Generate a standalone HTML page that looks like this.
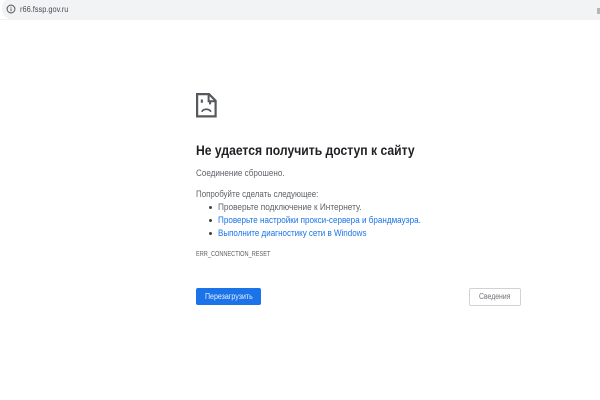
<!DOCTYPE html>
<html lang="ru">
<head>
<meta charset="utf-8">
<title>r66.fssp.gov.ru</title>
<style>
html,body{margin:0;padding:0;width:600px;height:400px;overflow:hidden;background:#fff;font-family:"Liberation Sans","DejaVu Sans",sans-serif}
#wrap{position:absolute;left:0;top:0;width:600px;height:400px;filter:blur(.35px)}
.t{position:absolute;white-space:nowrap;line-height:1;transform-origin:0 50%}
#line{position:absolute;left:0;top:19px;width:600px;height:1px;background:#f1f2f3}
#pill{position:absolute;left:2px;top:-2px;width:598px;height:21px;background:#f1f3f4;border-radius:10px 0 0 10px}
.g{color:#5f6368;font-size:9px}
.b{color:#1a73e8;font-size:9px}
.dot{position:absolute;left:208.5px;width:3px;height:3px;border-radius:50%;background:#444}
.btn{position:absolute;box-sizing:border-box;border-radius:2px}
</style>
</head>
<body>
<div id="wrap">
<div id="line"></div>
<div id="pill"></div>
<svg style="position:absolute;left:6px;top:4px" width="10" height="10" viewBox="0 0 10 10"><circle cx="5" cy="5" r="3.9" fill="none" stroke="#5f6368" stroke-width="1.1"/><path d="M5 4.4V7.2M5 2.7V3.6" stroke="#5f6368" stroke-width="1"/></svg>
<div class="t" style="left:20px;top:5px;font-size:8.5px;color:#4a4d51;transform:scaleX(.87)">r66.fssp.gov.ru</div>
<div style="position:absolute;left:597px;top:8px;width:3px;height:6px;background:#b5b8bb"></div>

<svg style="position:absolute;left:196px;top:93px" width="21" height="25" viewBox="0 0 21 25">
<path d="M1.1 1.1H13L19.6 7.7V23.4H1.1Z" fill="none" stroke="#55585c" stroke-width="2.2"/>
<path d="M12.6 1.1V8.2H19.6" fill="none" stroke="#55585c" stroke-width="2"/>
<path d="M4.8 6.5H6.9V9.8H4.8ZM13 8.8H15.1V11.4H13Z" fill="#55585c"/>
<path d="M5.8 18.8C7.4 15.4 13.2 15.4 14.9 18.8" fill="none" stroke="#55585c" stroke-width="1.7"/>
</svg>

<div class="t" style="left:196px;top:144px;font-size:13.5px;font-weight:bold;color:#202124;transform:scaleX(.9)">Не удается получить доступ к сайту</div>
<div class="t g" style="left:196px;top:169px;transform:scaleX(.9)">Соединение сброшено.</div>
<div class="t g" style="left:196px;top:190px;transform:scaleX(.88)">Попробуйте сделать следующее:</div>
<div class="dot" style="top:206px"></div>
<div class="t g" style="left:218px;top:203px;transform:scaleX(.917)">Проверьте подключение к Интернету.</div>
<div class="dot" style="top:219px"></div>
<div class="t b" style="left:218px;top:216px;transform:scaleX(.9)">Проверьте настройки прокси-сервера и брандмауэра.</div>
<div class="dot" style="top:232px"></div>
<div class="t b" style="left:218px;top:229px;transform:scaleX(.89)">Выполните диагностику сети в Windows</div>
<div class="t" style="left:196px;top:251px;font-size:7px;color:#5f6368;transform:scaleX(.8)">ERR_CONNECTION_RESET</div>

<div class="btn" style="left:196px;top:288px;width:65px;height:17px;background:#1a73e8"></div>
<div class="t" style="left:205px;top:293px;font-size:8px;color:#e8f0fe;transform:scaleX(.88)">Перезагрузить</div>
<div class="btn" style="left:469px;top:288px;width:52px;height:18px;background:#fff;border:1px solid #d0d2d4"></div>
<div class="t" style="left:479px;top:293px;font-size:8px;color:#6f7276;transform:scaleX(.86)">Сведения</div>
</div>
</body>
</html>
